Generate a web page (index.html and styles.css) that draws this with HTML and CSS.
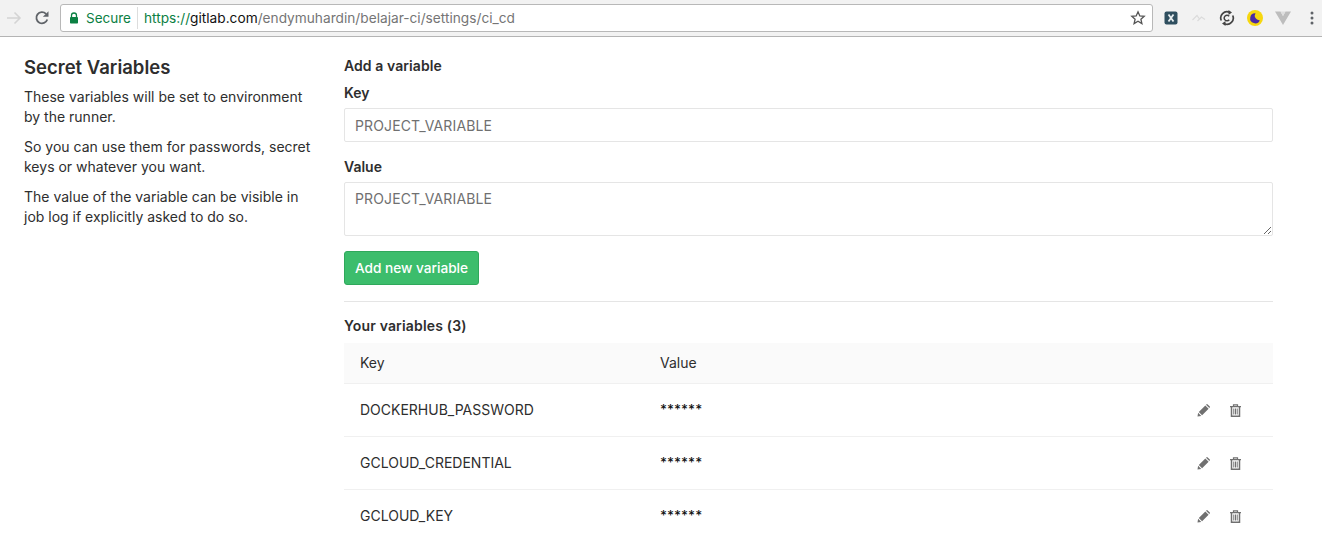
FILE: index.html
```html
<!DOCTYPE html>
<html lang="en">
<head>
<meta charset="utf-8">
<title>CI / CD Settings</title>
<link rel="stylesheet" href="styles.css">
</head>
<body>
<header class="toolbar">
  <svg class="nav-icon" viewBox="0 0 16 16"><path d="M1 8h13M8.500 2.500 14 8l-5.500 5.500" fill="none" stroke="#d4d4d4" stroke-width="1.600"/></svg>
  <svg class="nav-icon reload" viewBox="0 0 16 16"><path d="M13.300 9.500A5.600 5.600 0 1 1 12 3.800" fill="none" stroke="#5f6368" stroke-width="1.800"/><path d="M14.500 1.200v5.600H8.900z" fill="#5f6368"/></svg>
  <div class="omnibox">
    <svg class="lock" viewBox="0 0 10 12"><path d="M2.500 5V3.500a2.500 2.500 0 0 1 5 0V5" fill="none" stroke="#0b8043" stroke-width="1.300"/><rect x="1" y="5" width="8" height="6.500" rx=".8" fill="#0b8043"/></svg>
    <span class="secure">Secure</span>
    <span class="url"><span class="scheme">https://</span><span class="host">gitlab.com</span>/endymuhardin/belajar-ci/settings/ci_cd</span>
    <svg class="star" viewBox="0 0 16 16"><path d="m8 1.800 1.800 4.100 4.400.4-3.300 2.900 1 4.400L8 11.300l-3.900 2.300 1-4.400-3.300-2.900 4.400-.4z" fill="none" stroke="#555" stroke-width="1.300"/></svg>
  </div>
  <div class="extensions">
    <svg class="ext" viewBox="0 0 16 16"><rect x="1.500" y="1.500" width="13" height="13" rx="2" fill="#2f4f5f"/><path d="m5.500 4.500 5 7M10.500 4.500l-5 7" stroke="#e8eef0" stroke-width="1.800"/></svg>
    <svg class="ext" viewBox="0 0 16 16"><path d="M1.500 10 6 5.500l2.500 3.500 2-2 3.500 2.500M8.500 9l-2 2" fill="none" stroke="#dcdcdc" stroke-width="1.200"/></svg>
    <svg class="ext" viewBox="0 0 16 16"><path d="M2.300 10.500A6.200 6.200 0 0 1 10.500 2.300M13.700 5.500A6.200 6.200 0 0 1 5.500 13.700" fill="none" stroke="#444" stroke-width="1.700"/><path d="M9.500 0l3.500 2.500-3.500 2.500zM6.500 16 3 13.500 6.500 11z" fill="#444"/><path d="M10.200 6.300a2.800 2.800 0 1 0 0 3.400" fill="none" stroke="#444" stroke-width="1.500"/></svg>
    <svg class="ext" viewBox="0 0 16 16"><circle cx="8" cy="8" r="8" fill="#f6d70f"/><path d="M8.500 3.300a5 5 0 1 0 4.300 6.900 4.500 4.500 0 0 1-4.300-6.900z" fill="#4a2aa5"/></svg>
    <svg class="ext" viewBox="0 0 16 16"><path d="M0 1.500h5.500L8 6l2.500-4.500H16L8 15z" fill="#bdbdbd"/><path d="M5.500 1.500h5L8 6z" fill="#dedede"/></svg>
    <svg class="menu" viewBox="0 0 4 16"><circle cx="2" cy="3" r="1.500" fill="#5f6368"/><circle cx="2" cy="8" r="1.500" fill="#5f6368"/><circle cx="2" cy="13" r="1.500" fill="#5f6368"/></svg>
  </div>
</header>
<main class="settings">
  <aside class="intro">
    <h4 class="intro-title">Secret Variables</h4>
    <p>These variables will be set to environment by the runner.</p>
    <p>So you can use them for passwords, secret keys or whatever you want.</p>
    <p>The value of the variable can be visible in job log if explicitly asked to do so.</p>
  </aside>
  <section class="panel">
    <h5 class="form-title">Add a variable</h5>
    <label class="field-label" for="key">Key</label>
    <input class="control key-input" id="key" placeholder="PROJECT_VARIABLE">
    <label class="field-label value-label" for="value">Value</label>
    <textarea class="control value-input" id="value" placeholder="PROJECT_VARIABLE"></textarea>
    <button class="submit" type="button">Add new variable</button>
    <hr class="divider">
    <h5 class="list-title">Your variables (3)</h5>
    <div class="table">
      <div class="row head"><span class="c-key">Key</span><span class="c-val">Value</span></div>
      <div class="row"><span class="c-key">DOCKERHUB_PASSWORD</span><span class="c-val stars">******</span>
        <span class="actions">
          <svg class="act" viewBox="0 0 13 13"><path d="M.5 12.500l.6-3.800 3.200 3.200zM1.800 7.900 8.300 1.400l3.300 3.300-6.500 6.500zM9 .7l.3-.3a1 1 0 0 1 1.400 0l1.900 1.900a1 1 0 0 1 0 1.400l-.3.300z" fill="#707070"/></svg>
          <svg class="act" viewBox="0 0 13 13"><path d="M1 2.700h11M4.500 2.500V.8h4v1.700" fill="none" stroke="#707070" stroke-width="1.200"/><path d="M2.500 3v9.300h8V3" fill="none" stroke="#707070" stroke-width="1.500"/><path d="M4.800 4.500v6M6.500 4.500v6M8.200 4.500v6" stroke="#707070" stroke-width="1"/></svg>
        </span></div>
      <div class="row"><span class="c-key">GCLOUD_CREDENTIAL</span><span class="c-val stars">******</span>
        <span class="actions">
          <svg class="act" viewBox="0 0 13 13"><path d="M.5 12.500l.6-3.800 3.200 3.200zM1.800 7.900 8.300 1.400l3.300 3.300-6.500 6.500zM9 .7l.3-.3a1 1 0 0 1 1.400 0l1.900 1.900a1 1 0 0 1 0 1.400l-.3.300z" fill="#707070"/></svg>
          <svg class="act" viewBox="0 0 13 13"><path d="M1 2.700h11M4.500 2.500V.8h4v1.700" fill="none" stroke="#707070" stroke-width="1.200"/><path d="M2.500 3v9.300h8V3" fill="none" stroke="#707070" stroke-width="1.500"/><path d="M4.800 4.500v6M6.500 4.500v6M8.200 4.500v6" stroke="#707070" stroke-width="1"/></svg>
        </span></div>
      <div class="row last"><span class="c-key">GCLOUD_KEY</span><span class="c-val stars">******</span>
        <span class="actions">
          <svg class="act" viewBox="0 0 13 13"><path d="M.5 12.500l.6-3.800 3.200 3.200zM1.800 7.900 8.300 1.400l3.300 3.300-6.500 6.500zM9 .7l.3-.3a1 1 0 0 1 1.400 0l1.900 1.900a1 1 0 0 1 0 1.400l-.3.300z" fill="#707070"/></svg>
          <svg class="act" viewBox="0 0 13 13"><path d="M1 2.700h11M4.500 2.500V.8h4v1.700" fill="none" stroke="#707070" stroke-width="1.200"/><path d="M2.500 3v9.300h8V3" fill="none" stroke="#707070" stroke-width="1.500"/><path d="M4.800 4.500v6M6.500 4.500v6M8.200 4.500v6" stroke="#707070" stroke-width="1"/></svg>
        </span></div>
    </div>
  </section>
</main>
</body>
</html>
```

FILE: styles.css
```css
* { box-sizing: border-box; }
html, body { margin: 0; height: 548px; overflow: hidden; }
body { background: #fff; color: #2e2e2e; font: 14px/20px Inter, "Noto Sans", sans-serif; }

.toolbar { display: flex; align-items: center; height: 37px; padding: 0 0 1px 6px; background: #f2f2f2; border-bottom: 1px solid #b4b4b4; }
.nav-icon { width: 16px; height: 16px; flex: none; }
.reload { margin-left: 12px; }
.omnibox { display: flex; align-items: center; width: 1093px; height: 28px; margin-left: 10px; padding: 0 6px 0 8px; background: #fff; border: 1px solid #b8b8b8; border-radius: 3px; font-size: 14px; }
.lock { width: 10px; height: 12px; flex: none; }
.secure { margin-left: 7px; padding-right: 6px; border-right: 1px solid #ddd; color: #0b8043; font-size: 13.500px; line-height: 22px; }
.url { margin-left: 6px; color: #757575; font-size: 13.700px; flex: 1; white-space: nowrap; }
.scheme { color: #0b8043; }
.host { color: #111; }
.star { width: 16px; height: 16px; flex: none; }
.extensions { display: flex; align-items: center; margin-left: 10px; gap: 12px; }
.ext { width: 16px; height: 16px; flex: none; }
.menu { width: 4px; height: 16px; margin-left: 7px; }

.settings { display: flex; padding: 19px 49px 0 24px; }
.intro { width: 320px; flex: none; padding-right: 28px; }
.intro-title { margin: -1px 0 8px; font-size: 18.500px; line-height: 24px; font-weight: 600; color: #2e2e2e; }
.intro p { margin: 0 0 10px; font-size: 14px; line-height: 20px; }
.panel { flex: 1; min-width: 0; }
.form-title, .list-title { margin: 0; font-size: 14px; line-height: 20px; font-weight: 600; }
.form-title { margin-bottom: 7px; letter-spacing: .08px; }
.field-label { display: block; font-weight: 600; line-height: 20px; margin-bottom: 5px; font-size: 14px; }
.value-label { margin-top: 15px; }
.control { display: block; width: 100%; padding: 6px 10px; background: #fff; border: 1px solid #e5e5e5; border-radius: 2px; font: 14px/20px Inter, "Noto Sans", sans-serif; letter-spacing: .12px; color: #555; outline: none; }
.control::placeholder { color: #707070; opacity: 1; }
.key-input { height: 34px; }
.value-input { height: 54px; resize: vertical; }
.submit { display: block; height: 34px; margin-top: 15px; padding: 0 10px; background: #3cbd6c; border: 1px solid #2fa85b; border-radius: 3px; color: #fff; font: 500 13.650px/20px Inter, "Noto Sans", sans-serif; }
.divider { margin: 16px 0 14px; border: 0; border-top: 1px solid #e5e5e5; }
.list-title { margin-bottom: 7px; letter-spacing: .17px; }
.table { display: block; }
.row { display: flex; align-items: center; height: 53px; padding-left: 16px; border-bottom: 1px solid #f0f0f0; }
.head { height: 41px; background: #fafafa; }
.last { border-bottom: 0; padding-bottom: 1px; }
.c-key { width: 300px; flex: none; }
.c-val { flex: 1; }
.stars { color: #111; font-weight: 500; font-size: 13.500px; padding-bottom: 2px; }
.actions { display: flex; gap: 19px; margin-right: 31px; }
.act { width: 13px; height: 13px; }
```
